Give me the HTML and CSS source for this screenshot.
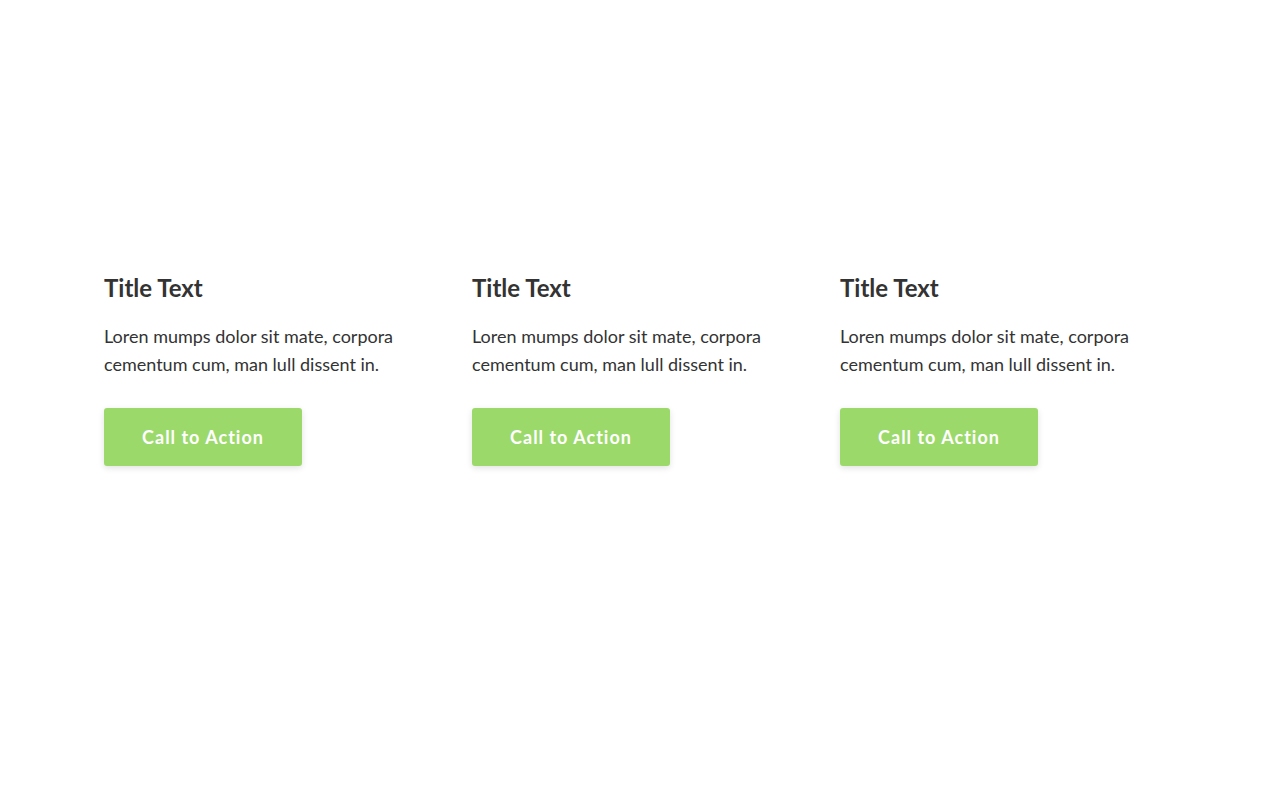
FILE: index.html
```html
<!DOCTYPE html>
<html>
<head>
<meta charset="utf-8">
<link rel="stylesheet" href="styles.css">
</head>
<body>
<main class="page">
  <section class="features">
    <div class="feature">
      <h2 class="feature-title">Title Text</h2>
      <p class="feature-text">Loren mumps dolor sit mate, corpora cementum cum, man lull dissent in.</p>
      <a class="cta" href="#">Call to Action</a>
    </div>
    <div class="feature">
      <h2 class="feature-title">Title Text</h2>
      <p class="feature-text">Loren mumps dolor sit mate, corpora cementum cum, man lull dissent in.</p>
      <a class="cta" href="#">Call to Action</a>
    </div>
    <div class="feature">
      <h2 class="feature-title">Title Text</h2>
      <p class="feature-text">Loren mumps dolor sit mate, corpora cementum cum, man lull dissent in.</p>
      <a class="cta" href="#">Call to Action</a>
    </div>
  </section>
</main>
</body>
</html>
```

FILE: styles.css
```css
* { box-sizing: border-box; }
html, body { margin: 0; padding: 0; background: #fff; }
body {
  font-family: "Lato", "Open Sans", sans-serif;
  color: #333;
}
.page {
  height: 804px;
  padding-top: 272px;
}
.features {
  width: 1072px;
  margin: 0 auto;
  display: grid;
  grid-template-columns: repeat(3, 336px);
  column-gap: 32px;
}
.feature {
  display: flex;
  flex-direction: column;
  align-items: flex-start;
}
.feature-title {
  margin: 0;
  font-size: 24px;
  line-height: 32px;
  font-weight: 700;
  color: #333;
}
.feature-text {
  margin: 18px 0 0;
  font-size: 18px;
  line-height: 28px;
  color: #333;
}
.cta {
  margin-top: 30px;
  width: 198px;
  height: 58px;
  display: flex;
  align-items: center;
  justify-content: center;
  background: #9bd96b;
  color: #fff;
  font-weight: 700;
  font-size: 18px;
  letter-spacing: 1px;
  text-decoration: none;
  border-radius: 3px;
  box-shadow: 0 2px 6px rgba(0,0,0,0.12);
}
```
